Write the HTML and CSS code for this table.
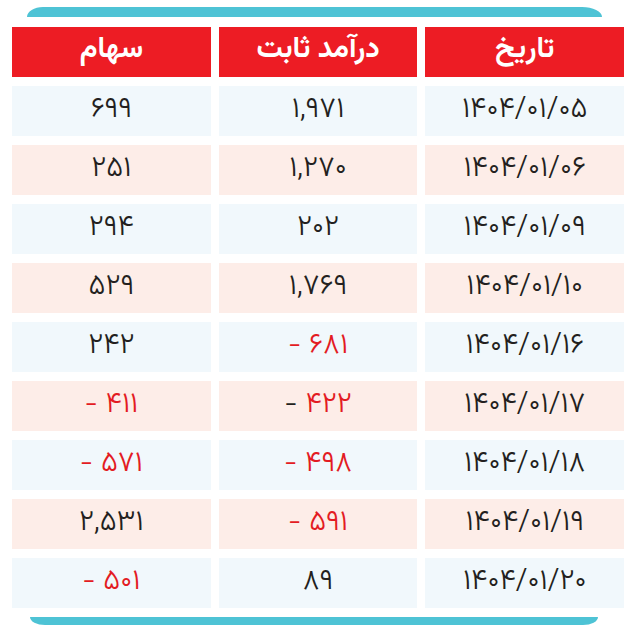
FILE: index.html
```html
<!DOCTYPE html>
<html lang="fa">
<head>
<meta charset="utf-8">
<title>جدول</title>
<link rel="stylesheet" href="styles.css">
</head>
<body>
<div class="card">
  <div class="tab tab-top"></div>
  <div class="table" dir="rtl">
    <div class="cell head">تاریخ</div>
    <div class="cell head">درآمد ثابت</div>
    <div class="cell head">سهام</div>

    <div class="cell blue"><span dir="ltr">۱۴۰۴/۰۱/۰۵</span></div>
    <div class="cell blue"><span dir="ltr">۱,۹۷۱</span></div>
    <div class="cell blue"><span dir="ltr">۶۹۹</span></div>

    <div class="cell pink"><span dir="ltr">۱۴۰۴/۰۱/۰۶</span></div>
    <div class="cell pink"><span dir="ltr">۱,۲۷۰</span></div>
    <div class="cell pink"><span dir="ltr">۲۵۱</span></div>

    <div class="cell blue"><span dir="ltr">۱۴۰۴/۰۱/۰۹</span></div>
    <div class="cell blue"><span dir="ltr">۲۰۲</span></div>
    <div class="cell blue"><span dir="ltr">۲۹۴</span></div>

    <div class="cell pink"><span dir="ltr">۱۴۰۴/۰۱/۱۰</span></div>
    <div class="cell pink"><span dir="ltr">۱,۷۶۹</span></div>
    <div class="cell pink"><span dir="ltr">۵۲۹</span></div>

    <div class="cell blue"><span dir="ltr">۱۴۰۴/۰۱/۱۶</span></div>
    <div class="cell blue neg"><span dir="ltr">- ۶۸۱</span></div>
    <div class="cell blue"><span dir="ltr">۲۴۲</span></div>

    <div class="cell pink"><span dir="ltr">۱۴۰۴/۰۱/۱۷</span></div>
    <div class="cell pink neg"><span dir="ltr"><span class="dash">-</span> ۴۲۲</span></div>
    <div class="cell pink neg"><span dir="ltr">- ۴۱۱</span></div>

    <div class="cell blue"><span dir="ltr">۱۴۰۴/۰۱/۱۸</span></div>
    <div class="cell blue neg"><span dir="ltr">- ۴۹۸</span></div>
    <div class="cell blue neg"><span dir="ltr">- ۵۷۱</span></div>

    <div class="cell pink"><span dir="ltr">۱۴۰۴/۰۱/۱۹</span></div>
    <div class="cell pink neg"><span dir="ltr">- ۵۹۱</span></div>
    <div class="cell pink"><span dir="ltr">۲,۵۳۱</span></div>

    <div class="cell blue"><span dir="ltr">۱۴۰۴/۰۱/۲۰</span></div>
    <div class="cell blue"><span dir="ltr">۸۹</span></div>
    <div class="cell blue neg"><span dir="ltr">- ۵۰۱</span></div>
  </div>
  <div class="tab tab-bottom"></div>
</div>
</body>
</html>
```

FILE: styles.css
```css
* { box-sizing: border-box; }

html, body {
  margin: 0;
  padding: 0;
  background: #ffffff;
}

body {
  font-family: "Vazirmatn", "Noto Sans Arabic", "DejaVu Sans", sans-serif;
  color: #231f20;
}

.card {
  width: 635px;
  height: 632px;
  padding-top: 7px;
  display: flex;
  flex-direction: column;
}

.tab {
  background: #4ec3d5;
}

.tab-top {
  margin-left: 27px;
  width: 575px;
  height: 10px;
  border-radius: 16px 20px 0 0 / 10px 10px 0 0;
}

.table {
  margin-top: 10px;
  margin-left: 12px;
  width: 612px;
  display: grid;
  grid-template-columns: repeat(3, 1fr);
  grid-auto-rows: 50px;
  column-gap: 8px;
  row-gap: 9px;
}

.cell {
  display: flex;
  align-items: center;
  justify-content: center;
  font-size: 29px;
  line-height: 1;
  font-weight: 300;
  padding-bottom: 2px;
}

.head {
  background: #ed1c24;
  color: #ffffff;
  font-weight: 700;
  font-size: 29px;
  padding-bottom: 4px;
}

.blue { background: #f1f8fc; }
.pink { background: #fdede8; }

.neg { color: #e31b23; }
.dash { color: #231f20; }

.tab-bottom {
  margin-top: 9px;
  margin-left: 30px;
  width: 568px;
  height: 8px;
  border-radius: 0 0 15px 15px / 0 0 8px 8px;
}
```
